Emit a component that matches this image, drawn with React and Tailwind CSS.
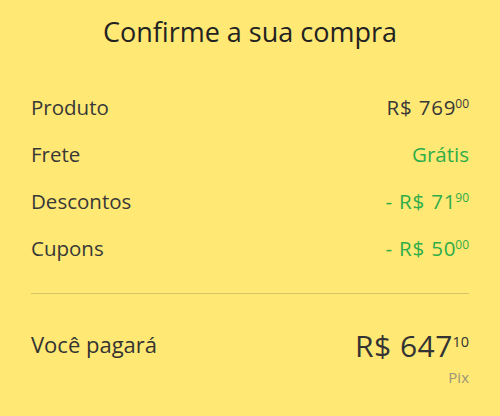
import React from 'react';

const Price = ({ sign, int, cents, className, centsClass }) => (
    <span className={`inline-flex items-start ${className}`}>
        <span>{sign}R$ {int}</span>
        <span className={centsClass}>{cents}</span>
    </span>
);

const Row = ({ label, children }) => (
    <div className="flex items-center justify-between h-[47px]">
        <span className="text-[20.5px] text-[#383838]">{label}</span>
        {children}
    </div>
);

const cents = "text-[12px] leading-[14px] mt-[5px] ml-[-1px] tracking-normal";

const App = () => {
    return (
        <div className="w-[500px] h-[416px] bg-[#ffe873] px-[31px] font-['Open_Sans',sans-serif] overflow-hidden">
            <h1 className="text-center text-[27px] text-[#222222] pt-[13px] leading-[38px]">Confirme a sua compra</h1>

            <div className="mt-[33px]">
                <Row label="Produto">
                    <Price int="769" cents="00" className="text-[20.5px] tracking-[0.8px] text-[#383838]" centsClass={cents} />
                </Row>
                <Row label="Frete">
                    <span className="text-[20.5px] text-[#2fad4a]">Grátis</span>
                </Row>
                <Row label="Descontos">
                    <Price sign="- " int="71" cents="90" className="text-[20.5px] tracking-[0.8px] text-[#2fad4a]" centsClass={cents} />
                </Row>
                <Row label="Cupons">
                    <Price sign="- " int="50" cents="00" className="text-[20.5px] tracking-[0.8px] text-[#2fad4a]" centsClass={cents} />
                </Row>
            </div>

            <div className="border-t border-[#d3c46c] mt-[21px]" />

            <div className="flex justify-between items-start mt-[34px]">
                <span className="text-[22px] font-medium text-[#333333]">Você pagará</span>
                <div className="flex flex-col items-end">
                    <Price int="647" cents="10" className="text-[30px] leading-[36px] tracking-[0.5px] text-[#333333]" centsClass="text-[14.5px] leading-[16px] mt-[6px] ml-[-0.5px] tracking-normal" />
                    <span className="text-[15px] leading-[20px] text-[#9a9579] mt-[3px]">Pix</span>
                </div>
            </div>
        </div>
    );
};

export default App;
